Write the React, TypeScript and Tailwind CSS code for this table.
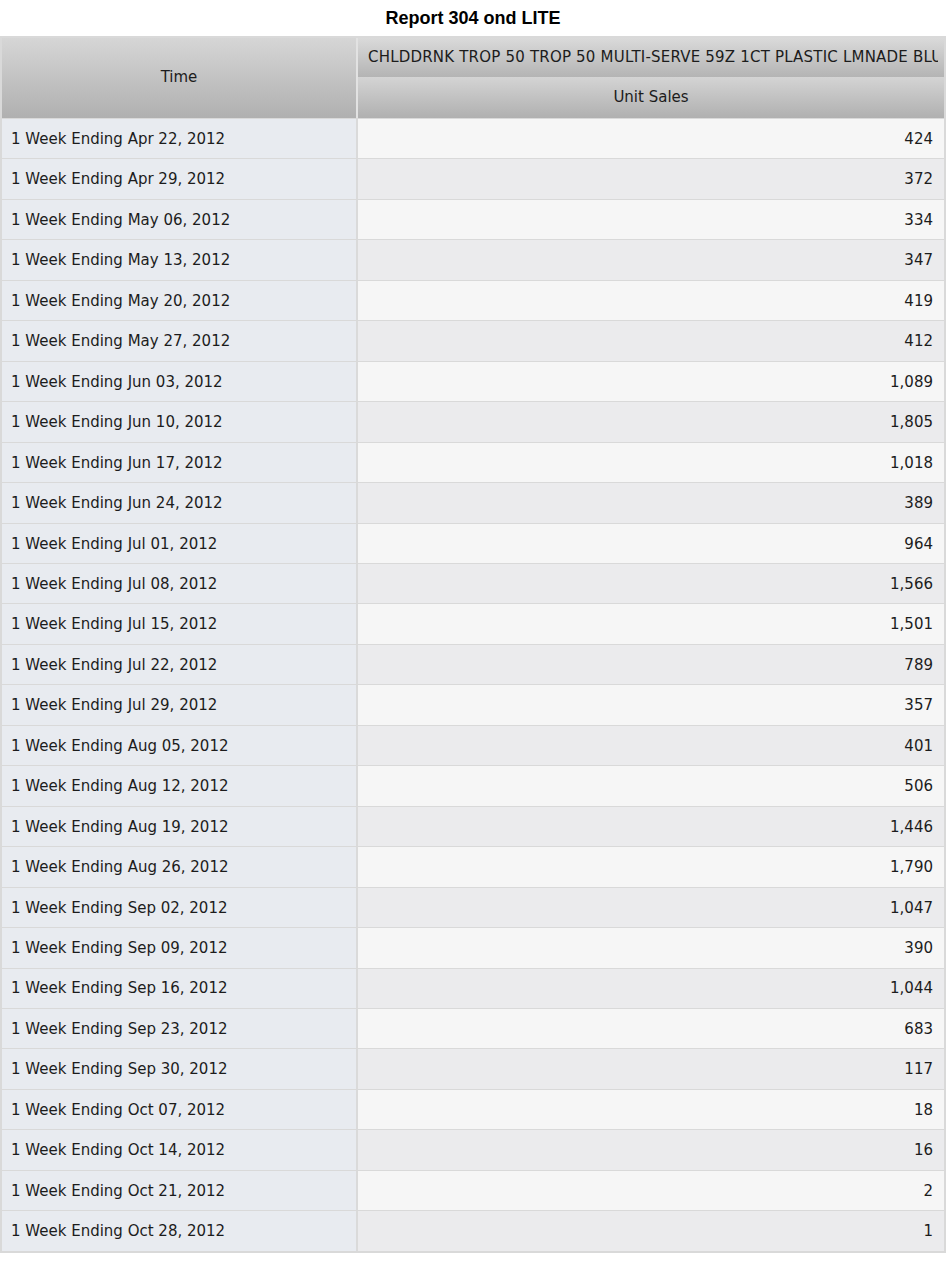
import React from 'react';

const rows: [string, string][] = [
  ['1 Week Ending Apr 22, 2012', '424'],
  ['1 Week Ending Apr 29, 2012', '372'],
  ['1 Week Ending May 06, 2012', '334'],
  ['1 Week Ending May 13, 2012', '347'],
  ['1 Week Ending May 20, 2012', '419'],
  ['1 Week Ending May 27, 2012', '412'],
  ['1 Week Ending Jun 03, 2012', '1,089'],
  ['1 Week Ending Jun 10, 2012', '1,805'],
  ['1 Week Ending Jun 17, 2012', '1,018'],
  ['1 Week Ending Jun 24, 2012', '389'],
  ['1 Week Ending Jul 01, 2012', '964'],
  ['1 Week Ending Jul 08, 2012', '1,566'],
  ['1 Week Ending Jul 15, 2012', '1,501'],
  ['1 Week Ending Jul 22, 2012', '789'],
  ['1 Week Ending Jul 29, 2012', '357'],
  ['1 Week Ending Aug 05, 2012', '401'],
  ['1 Week Ending Aug 12, 2012', '506'],
  ['1 Week Ending Aug 19, 2012', '1,446'],
  ['1 Week Ending Aug 26, 2012', '1,790'],
  ['1 Week Ending Sep 02, 2012', '1,047'],
  ['1 Week Ending Sep 09, 2012', '390'],
  ['1 Week Ending Sep 16, 2012', '1,044'],
  ['1 Week Ending Sep 23, 2012', '683'],
  ['1 Week Ending Sep 30, 2012', '117'],
  ['1 Week Ending Oct 07, 2012', '18'],
  ['1 Week Ending Oct 14, 2012', '16'],
  ['1 Week Ending Oct 21, 2012', '2'],
  ['1 Week Ending Oct 28, 2012', '1'],
];

export default function App() {
  return (
    <div className="w-[946px] bg-white text-[#1c1c1c] font-['Verdana','DejaVu_Sans',sans-serif] text-[15px]">
      <div className="h-[36px] flex items-center justify-center font-['Liberation_Sans',Arial,sans-serif] font-bold text-[18px] text-black">
        Report 304 ond LITE
      </div>

      <div className="w-[946px] border-2 border-[#d9d9d9] overflow-hidden">
        {/* header */}
        <div className="flex h-[80px]">
          <div className="w-[356px] shrink-0 flex items-center justify-center pb-[2px] bg-gradient-to-b from-[#d6d6d6] to-[#b0b0b0] border-r-2 border-[#e2e2e2]">
            Time
          </div>
          <div className="flex-1 min-w-0 flex flex-col">
            <div className="h-[39px] flex items-center pl-[10px] pr-[6px] bg-gradient-to-b from-[#dadada] to-[#b4b4b4]">
              <span className="overflow-hidden whitespace-nowrap tracking-[0.2px]">
                CHLDDRNK TROP 50 TROP 50 MULTI-SERVE 59Z 1CT PLASTIC LMNADE BLUEBERRY
              </span>
            </div>
            <div className="h-[41px] flex items-center justify-center bg-gradient-to-b from-[#d4d4d4] to-[#b0b0b0]">
              Unit Sales
            </div>
          </div>
        </div>

        {/* body */}
        {rows.map(([label, value], i) => (
          <div key={label} className="flex h-[40.46px] border-t border-[#d9d9d9]">
            <div className="w-[356px] shrink-0 flex items-center pl-[9px] pt-[1px] bg-[#e8ebf0] border-r-2 border-[#dadada]">
              {label}
            </div>
            <div
              className={
                i % 2 === 0
                  ? 'flex-1 flex items-center justify-end pr-[11px] pt-[1px] bg-[#f6f6f6]'
                  : 'flex-1 flex items-center justify-end pr-[11px] pt-[1px] bg-[#ebebed]'
              }
            >
              {value}
            </div>
          </div>
        ))}
      </div>
    </div>
  );
}
